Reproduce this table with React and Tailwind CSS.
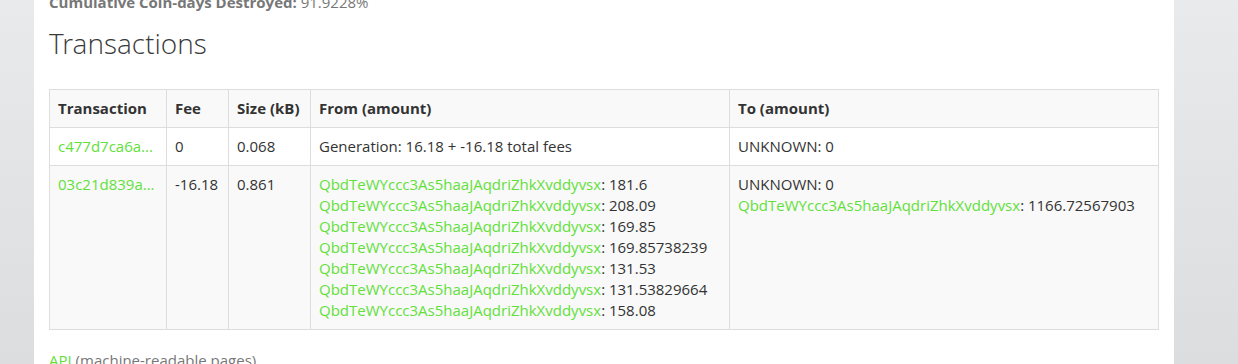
export default function App() {
  const addr = "QbdTeWYccc3As5haaJAqdriZhkXvddyvsx";
  const from = ["181.6", "208.09", "169.85", "169.85738239", "131.53", "131.53829664", "158.08"];
  const green = "text-[#62e03a]";
  return (
    <div className="h-[364px] w-[1238px] overflow-hidden bg-gradient-to-b from-[#e9eaec] to-[#dcdddf] text-[15px] leading-[21px] text-[#333]" style={{ fontFamily: '"Open Sans", sans-serif' }}>
      <div className="ml-[34px] flow-root h-full w-[1140px] bg-white px-[15px]">
        <div className="-mt-[8px] text-[#777]">
          <span className="font-bold">Cumulative Coin-days Destroyed:</span> 91.9228%
        </div>
        <h2 className="mt-[14px] text-[28px] font-light leading-[33px] text-[#3a3a3a]" style={{ fontFamily: '"Open Sans Light", "Open Sans", sans-serif' }}>Transactions</h2>
        <table className="mt-[29px] w-[1110px] table-fixed border-collapse border border-[#ddd]">
          <colgroup>
            <col className="w-[117px]" />
            <col className="w-[62px]" />
            <col className="w-[82px]" />
            <col className="w-[419px]" />
            <col />
          </colgroup>
          <thead>
            <tr className="bg-[#f9f9f9]">
              {["Transaction", "Fee", "Size (kB)", "From (amount)", "To (amount)"].map((h) => (
                <th key={h} className="border border-[#ddd] p-[8px] text-left font-bold whitespace-nowrap">{h}</th>
              ))}
            </tr>
          </thead>
          <tbody>
            <tr className="bg-white align-top">
              <td className={`border border-[#ddd] p-[8px] whitespace-nowrap ${green}`}>c477d7ca6a...</td>
              <td className="border border-[#ddd] p-[8px]">0</td>
              <td className="border border-[#ddd] p-[8px]">0.068</td>
              <td className="border border-[#ddd] p-[8px]">Generation: 16.18 + -16.18 total fees</td>
              <td className="border border-[#ddd] p-[8px]">UNKNOWN: 0</td>
            </tr>
            <tr className="bg-[#f9f9f9] align-top">
              <td className={`border border-[#ddd] p-[8px] whitespace-nowrap ${green}`}>03c21d839a...</td>
              <td className="border border-[#ddd] p-[8px]">-16.18</td>
              <td className="border border-[#ddd] p-[8px]">0.861</td>
              <td className="border border-[#ddd] p-[8px]">
                {from.map((v, i) => (
                  <div key={i} className="whitespace-nowrap"><span className={green}>{addr}</span>: {v}</div>
                ))}
              </td>
              <td className="border border-[#ddd] p-[8px]">
                <div>UNKNOWN: 0</div>
                <div className="whitespace-nowrap"><span className={green}>{addr}</span>: 1166.72567903</div>
              </td>
            </tr>
          </tbody>
        </table>
        <div className="mt-[20px] text-[#777]">
          <span className={green}>API</span> (machine-readable pages)
        </div>
      </div>
    </div>
  );
}
